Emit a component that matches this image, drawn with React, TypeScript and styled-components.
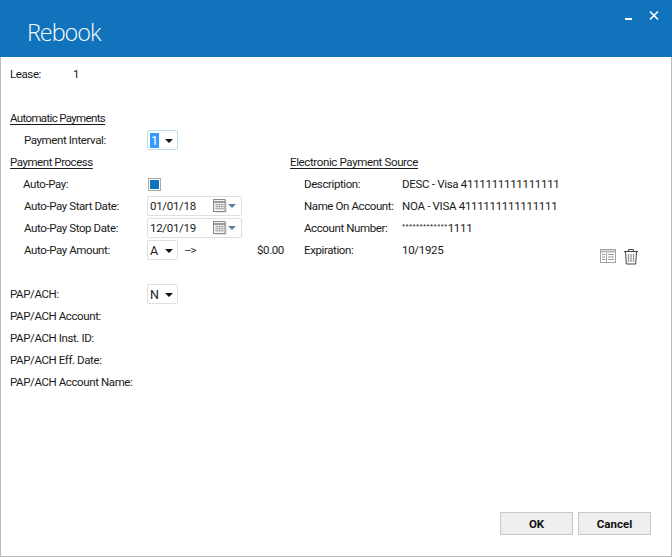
import React from "react";
import styled, { createGlobalStyle } from "styled-components";

const Global = createGlobalStyle`
  html, body { margin: 0; padding: 0; background: #fff; }
  #root { width: 672px; height: 557px; }
  * { box-sizing: border-box; }
`;

const Dialog = styled.div`
  width: 672px;
  height: 557px;
  display: flex;
  flex-direction: column;
  background: #fff;
  border: 1px solid #bdbdbd;
  border-top: 0;
  font-family: Roboto, "Noto Sans", sans-serif;
  font-size: 11.5px;
  letter-spacing: -0.4px;
  color: #1a1a1a;
`;

const TitleBar = styled.header`
  height: 57px;
  margin: 0 -1px;
  flex: none;
  background: #1173bb;
  color: #fff;
  display: flex;
  justify-content: space-between;
  padding: 0 13px 0 27px;
`;

const Title = styled.h1`
  margin: 16px 0 0;
  font-family: "Open Sans", sans-serif;
  font-weight: 300;
  font-size: 23.5px;
  line-height: 33px;
  letter-spacing: -1.1px;
`;

const WindowButtons = styled.div`
  display: flex;
  gap: 16px;
  padding-top: 8px;
  height: 26px;
`;

const Body = styled.main`
  flex: 1;
  padding: 6px 0 0 9px;
  display: flex;
  flex-direction: column;
`;

const Row = styled.div<{ $indent?: number }>`
  height: 22px;
  display: flex;
  align-items: center;
  padding-left: ${(p) => p.$indent ?? 0}px;
  white-space: nowrap;
`;

const Spacer = styled.div<{ $h: number }>`
  height: ${(p) => p.$h}px;
`;

const Label = styled.span<{ $width: number }>`
  width: ${(p) => p.$width}px;
  flex: none;
`;

const Value = styled.span`
  letter-spacing: -0.3px;
`;

const Heading = styled.span<{ $spacing: number }>`
  text-decoration: underline;
  text-underline-offset: 2px;
  letter-spacing: ${(p) => p.$spacing}px;
`;

const Columns = styled.div`
  display: grid;
  grid-template-columns: 280px 1fr;
`;

const Column = styled.div`
  display: flex;
  flex-direction: column;
`;

const SelectBox = styled.div<{ $focused?: boolean }>`
  width: 31px;
  height: 20px;
  margin-left: -1px;
  border: 1px solid ${(p) => (p.$focused ? "#bcdcf0" : "#dcdfe3")};
  border-radius: 2px;
  display: flex;
  align-items: center;
  justify-content: space-between;
  padding: 0 4px 0 2px;
  background: #fff;
  font-size: 12.5px;
  letter-spacing: 0;
`;

const Selected = styled.span`
  background: #3399ff;
  color: #fff;
  padding: 0 1px;
  line-height: 15px;
`;

const Arrow = styled.span`
  width: 0;
  height: 0;
  border-left: 4px solid transparent;
  border-right: 4px solid transparent;
  border-top: 4px solid #111;
  margin-top: 1px;
`;

const Check = styled.div`
  width: 13px;
  height: 13px;
  border: 1px solid #a9a9a9;
  padding: 1px;
  background: #fff;
  &::after {
    content: "";
    display: block;
    width: 9px;
    height: 9px;
    background: #1173bb;
  }
`;

const DateBox = styled.div`
  width: 95px;
  height: 20px;
  margin-left: -1px;
  border: 1px solid #dcdfe3;
  border-radius: 2px;
  display: flex;
  align-items: center;
  padding: 0 5px 0 2px;
  font-size: 11.5px;
  letter-spacing: -0.3px;
`;

const DateValue = styled.span`
  flex: 1;
`;

const SmallArrow = styled.span`
  width: 0;
  height: 0;
  margin-left: 1px;
  border-left: 4px solid transparent;
  border-right: 4px solid transparent;
  border-top: 4px solid #5b7fa6;
`;

const Arrowed = styled.span`
  margin-left: 7px;
  width: 72px;
`;

const Stars = styled.span`
  font-family: "Liberation Sans", sans-serif;
  font-size: 8px;
  letter-spacing: 0.4px;
  align-self: flex-start;
  margin-top: 5px;
`;

const Tools = styled.div`
  display: flex;
  gap: 7px;
  margin-left: auto;
  margin-right: 32px;
  padding-top: 12px;
  align-items: center;
`;

const Footer = styled.footer`
  display: flex;
  justify-content: flex-end;
  gap: 5px;
  padding: 0 20px 21px 0;
`;

const Button = styled.button`
  width: 73px;
  height: 23px;
  padding: 0;
  border: 1px solid #c8c8c8;
  background: #eeeeee;
  font: 700 11.5px Roboto, sans-serif;
  color: #111;
`;

const CalendarIcon = () => (
  <svg width="14" height="14" viewBox="0 0 14 14">
    <rect x="2.5" y="1.5" width="11" height="12" fill="#8d8d8d" opacity=".45" />
    <rect x="0.5" y="0.5" width="11.5" height="12" fill="#f4f4f4" stroke="#8a8a8a" />
    <path d="M1 3h11" stroke="#777" strokeWidth="1.4" />
    <path d="M2 5.5h9M2 7.5h9M2 9.5h9M4 4.5v6.5M6.5 4.5v6.5M9 4.5v6.5" stroke="#a8a8a8" strokeWidth=".8" />
  </svg>
);

const GridIcon = () => (
  <svg width="16" height="16" viewBox="0 0 16 16" fill="none" stroke="#a3a3a3">
    <rect x="0.5" y="1.5" width="15" height="13" />
    <path d="M1 3.5h14" stroke="#b5b5b5" strokeWidth="2" />
    <path d="M6.5 5v9" />
    <path d="M2 6.5h3M2 9h3M2 11.5h3M8 6.5h6M8 9h6M8 11.5h6" stroke="#9a9a9a" strokeWidth="1.2" />
  </svg>
);

const TrashIcon = () => (
  <svg width="16" height="17" viewBox="0 0 16 17" fill="none" stroke="#444">
    <path d="M1 3.500h14M5.500 3.500V1.500h5v2" />
    <path d="M2.500 3.500l.8 12.500h9.400l.8-12.500" />
    <path d="M5.500 6v8M8 6v8M10.500 6v8" stroke="#999" strokeWidth="1.3" />
  </svg>
);

const leftRows = ["Auto-Pay Start Date:", "Auto-Pay Stop Date:"];
const dates = ["01/01/18", "12/01/19"];
const papRows = ["PAP/ACH Account:", "PAP/ACH Inst. ID:", "PAP/ACH Eff. Date:", "PAP/ACH Account Name:"];

export default function App() {
  return (
    <>
      <Global />
      <Dialog>
        <TitleBar>
          <Title>Rebook</Title>
          <WindowButtons>
            <svg width="8" height="16" viewBox="0 0 8 16"><rect x="0" y="10" width="7" height="2" fill="#fff" /></svg>
            <svg width="10" height="16" viewBox="0 0 10 16"><path d="M1 3.500l8 8M9 3.500l-8 8" stroke="#fff" strokeWidth="1.6" /></svg>
          </WindowButtons>
        </TitleBar>
        <Body>
          <Row>
            <Label $width={63}>Lease:</Label>
            <span>1</span>
          </Row>
          <Spacer $h={22} />
          <Row><Heading $spacing={-0.65}>Automatic Payments</Heading></Row>
          <Row $indent={14}>
            <Label $width={124}>Payment Interval:</Label>
            <SelectBox $focused><Selected>1</Selected><Arrow /></SelectBox>
          </Row>
          <Columns>
            <Column>
              <Row><Heading $spacing={-0.45}>Payment Process</Heading></Row>
              <Row $indent={13}>
                <Label $width={125}>Auto-Pay:</Label>
                <Check />
              </Row>
              {leftRows.map((l, i) => (
                <Row $indent={14} key={l}>
                  <Label $width={124}>{l}</Label>
                  <DateBox>
                    <DateValue>{dates[i]}</DateValue>
                    <CalendarIcon />
                    <SmallArrow />
                  </DateBox>
                </Row>
              ))}
              <Row $indent={14}>
                <Label $width={124}>Auto-Pay Amount:</Label>
                <SelectBox>A<Arrow /></SelectBox>
                <Arrowed>--&gt;</Arrowed>
                <span>$0.00</span>
              </Row>
            </Column>
            <Column>
              <Row><Heading $spacing={-0.37}>Electronic Payment Source</Heading></Row>
              <Row $indent={14}><Label $width={98}>Description:</Label><Value>DESC - Visa 4111111111111111</Value></Row>
              <Row $indent={14}><Label $width={98}>Name On Account:</Label><Value>NOA - VISA 4111111111111111</Value></Row>
              <Row $indent={14}><Label $width={98}>Account Number:</Label><Stars>*************</Stars><Value>1111</Value></Row>
              <Row $indent={14}>
                <Label $width={98}>Expiration:</Label><Value>10/1925</Value>
                <Tools><GridIcon /><TrashIcon /></Tools>
              </Row>
            </Column>
          </Columns>
          <Spacer $h={22} />
          <Row>
            <Label $width={138}>PAP/ACH:</Label>
            <SelectBox>N<Arrow /></SelectBox>
          </Row>
          {papRows.map((l) => <Row key={l}>{l}</Row>)}
        </Body>
        <Footer>
          <Button>OK</Button>
          <Button>Cancel</Button>
        </Footer>
      </Dialog>
    </>
  );
}
